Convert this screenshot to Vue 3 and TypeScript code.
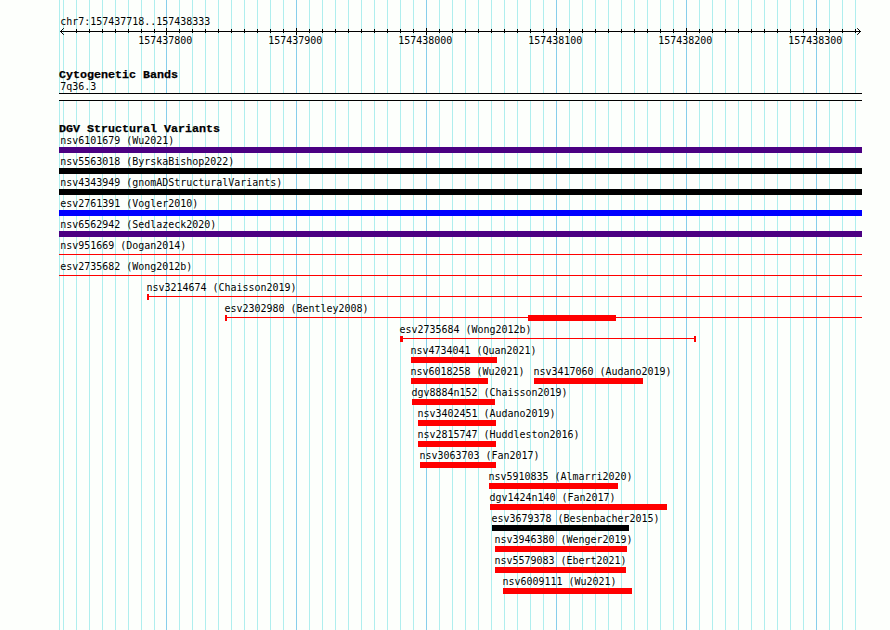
<script setup lang="ts">
interface Feature {
  name: string
  start: number
  end: number
  color?: string
  kind?: 'bar' | 'line'
  caps?: [number, number][]
  thick?: [number, number]
}

const LEFT = 59
const RIGHT = 862

const majors = [0, 1, 2, 3, 4, 5].map((i) => ({ x: 166 + i * 130, label: String(157437800 + i * 100) }))
const minors: number[] = []
for (let x = 63; x < 166; x += 13) minors.push(x)
for (let x = 179; x < RIGHT; x += 13) if ((x - 166) % 130 !== 0) minors.push(x)
const ticks = minors.filter((x) => x > 63)

const full = (name: string, color: string): Feature[] => [{ name, start: LEFT, end: RIGHT, color }]
const bar = (name: string, start: number, end: number, color = '#ff0000'): Feature => ({ name, start, end, color })

const rows: Feature[][] = [
  full('nsv6101679 (Wu2021)', '#4b0082'),
  full('nsv5563018 (ByrskaBishop2022)', '#000000'),
  full('nsv4343949 (gnomADStructuralVariants)', '#000000'),
  full('esv2761391 (Vogler2010)', '#0000ff'),
  full('nsv6562942 (Sedlazeck2020)', '#4b0082'),
  [{ name: 'nsv951669 (Dogan2014)', start: LEFT, end: RIGHT, kind: 'line' }],
  [{ name: 'esv2735682 (Wong2012b)', start: LEFT, end: RIGHT, kind: 'line' }],
  [{ name: 'nsv3214674 (Chaisson2019)', start: 147, end: RIGHT, kind: 'line', caps: [[147, 2]] }],
  [{ name: 'esv2302980 (Bentley2008)', start: 225, end: RIGHT, kind: 'line', caps: [[225, 2]], thick: [528, 616] }],
  [{ name: 'esv2735684 (Wong2012b)', start: 400, end: 696, kind: 'line', caps: [[400, 3], [694, 2]] }],
  [bar('nsv4734041 (Quan2021)', 411, 497)],
  [bar('nsv6018258 (Wu2021)', 411, 488), bar('nsv3417060 (Audano2019)', 534, 643)],
  [bar('dgv8884n152 (Chaisson2019)', 412, 495)],
  [bar('nsv3402451 (Audano2019)', 418, 496)],
  [bar('nsv2815747 (Huddleston2016)', 418, 496)],
  [bar('nsv3063703 (Fan2017)', 420, 496)],
  [bar('nsv5910835 (Almarri2020)', 489, 618)],
  [bar('dgv1424n140 (Fan2017)', 490, 667)],
  [bar('esv3679378 (Besenbacher2015)', 492, 629, '#000000')],
  [bar('nsv3946380 (Wenger2019)', 495, 627)],
  [bar('nsv5579083 (Ebert2021)', 495, 626)],
  [bar('nsv6009111 (Wu2021)', 503, 632)],
]

const labelX = (f: Feature) => (f.start === LEFT ? 60.2 : f.start - 0.6)
</script>

<template>
  <main class="browser">
    <svg class="grid" width="890" height="630" aria-hidden="true">
      <rect class="minor" :x="LEFT" y="0" width="1" height="630" />
      <rect v-for="x in minors" :key="x" class="minor" :x="x" y="0" width="1" height="630" />
      <rect v-for="m in majors" :key="m.x" class="major" :x="m.x" y="0" width="1" height="630" />
    </svg>

    <svg class="ruler" width="890" height="60">
      <text class="label" x="60.2" y="25" textLength="150" lengthAdjust="spacingAndGlyphs">chr7:157437718..157438333</text>
      <rect x="60" y="31" width="801" height="1" />
      <path class="arrow" d="M63.8 28.2L60.5 31.5L63.8 34.8M857.2 28.2L860.5 31.5L857.2 34.8" />
      <rect v-for="x in ticks" :key="x" :x="x" y="29" width="1" height="4" />
      <g v-for="m in majors" :key="m.x">
        <rect :x="m.x" y="28" width="1" height="7" />
        <text class="label" :x="m.x - 27.8" y="44" textLength="54" lengthAdjust="spacingAndGlyphs">{{ m.label }}</text>
      </g>
    </svg>

    <svg class="bands" width="890" height="60">
      <text class="title" x="59" y="18" textLength="119" lengthAdjust="spacingAndGlyphs">Cytogenetic Bands</text>
      <text class="label" x="60.2" y="30" textLength="36" lengthAdjust="spacingAndGlyphs">7q36.3</text>
      <rect class="band" :x="LEFT" y="33" :width="RIGHT - LEFT" height="8" />
      <rect :x="LEFT" y="33" :width="RIGHT - LEFT" height="1" />
      <rect :x="LEFT" y="40" :width="RIGHT - LEFT" height="1" />
    </svg>

    <section class="variants">
      <svg class="heading" width="890" height="14">
        <text class="title" x="59" y="12" textLength="161" lengthAdjust="spacingAndGlyphs">DGV Structural Variants</text>
      </svg>
      <svg v-for="(row, i) in rows" :key="i" class="row" width="890" height="21">
        <g v-for="f in row" :key="f.name">
          <text class="label" :x="labelX(f)" y="10" :textLength="f.name.length * 6" lengthAdjust="spacingAndGlyphs">{{ f.name }}</text>
          <template v-if="f.kind === 'line'">
            <rect class="red" :x="f.start" y="15" :width="f.end - f.start" height="1" />
            <rect v-for="c in f.caps" :key="c[0]" class="red" :x="c[0]" y="13" :width="c[1]" height="6" />
            <rect v-if="f.thick" class="red" :x="f.thick[0]" y="13" :width="f.thick[1] - f.thick[0]" height="6" />
          </template>
          <rect v-else :x="f.start" y="13" :width="f.end - f.start" height="6" :fill="f.color" />
        </g>
      </svg>
    </section>
  </main>
</template>

<style>
body {
  margin: 0;
  background: #fdfffc;
}
</style>

<style scoped>
.browser {
  position: relative;
  display: flex;
  flex-direction: column;
  width: 890px;
  height: 630px;
  overflow: hidden;
  background: #fdfffc;
}
.grid {
  position: absolute;
  inset: 0;
}
.ruler,
.bands,
.variants {
  position: relative;
  flex: none;
}
.variants {
  display: flex;
  flex-direction: column;
}
.row,
.heading {
  display: block;
  flex: none;
}
.label {
  font: 11px 'DejaVu Sans Mono', monospace;
  white-space: pre;
}
.title {
  font: bold 11.5px 'Liberation Mono', monospace;
  stroke: #000;
  stroke-width: 0.25px;
}
.minor {
  fill: #afeeee;
}
.major {
  fill: #87ceeb;
}
.red {
  fill: #ff0000;
}
.band {
  fill: #fdfffc;
}
.arrow {
  fill: none;
  stroke: #000;
}
</style>
